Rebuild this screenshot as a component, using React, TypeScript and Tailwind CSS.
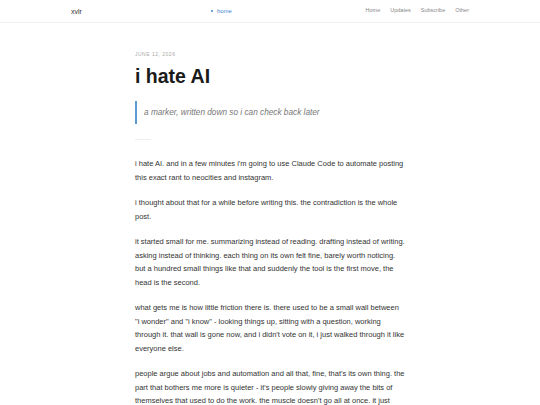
const paragraphs = [
  "i hate AI. and in a few minutes i'm going to use Claude Code to automate posting this exact rant to neocities and instagram.",
  "i thought about that for a while before writing this. the contradiction is the whole post.",
  "it started small for me. summarizing instead of reading. drafting instead of writing. asking instead of thinking. each thing on its own felt fine, barely worth noticing. but a hundred small things like that and suddenly the tool is the first move, the head is the second.",
  "what gets me is how little friction there is. there used to be a small wall between \"i wonder\" and \"i know\" - looking things up, sitting with a question, working through it. that wall is gone now, and i didn't vote on it, i just walked through it like everyone else.",
  "people argue about jobs and automation and all that, fine, that's its own thing. the part that bothers me more is quieter - it's people slowly giving away the bits of themselves that used to do the work. the muscle doesn't go all at once. it just gets a little softer every time you skip the rep.",
];

const navLinks = ["Home", "Updates", "Subscribe", "Other"];

export default function App() {
  return (
    <div className="min-h-screen bg-white font-['Liberation_Sans',Arial,sans-serif]">
      {/* Top bar */}
      <header className="h-[23px] border-b border-[#f0f0f0]">
        <div className="mx-auto flex h-full w-[400px] items-center">
          <span className="ml-[1px] text-[7px] leading-none text-[#333]">xvlr</span>
          <span className="ml-[129px] flex items-center gap-[4px] text-[6px] leading-none text-[#3f86d0]">
            <span className="h-[2px] w-[2px] rounded-full bg-[#3f86d0]" />
            home
          </span>
          <nav className="ml-auto flex items-center gap-[10px] pr-[1px]">
            {navLinks.map((link) => (
              <a key={link} className="text-[5.5px] leading-none text-[#888]">
                {link}
              </a>
            ))}
          </nav>
        </div>
      </header>

      {/* Post */}
      <main className="mx-auto w-[270px] pt-[28px] pb-10">
        <p className="text-[5px] leading-[7px] tracking-[0.1em] text-[#aaa] uppercase">June 12, 2026</p>
        <h1 className="mt-[7px] text-[19.5px] leading-[23px] font-bold text-[#1a1a1a]">i hate AI</h1>

        <blockquote className="mt-[13px] border-l-2 border-[#5b9bd5] py-[6px] pl-[7px]">
          <p className="text-[8.25px] leading-[11px] italic text-[#777]">a marker, written down so i can check back later</p>
        </blockquote>

        <div className="mt-[15px] h-px w-[16px] bg-[#eee]" />

        <article className="mt-[17px] flex flex-col gap-[12px]">
          {paragraphs.map((text, i) => (
            <p key={i} className="text-[7.5px] leading-[13.5px] text-[#333]">
              {text}
            </p>
          ))}
        </article>
      </main>
    </div>
  );
}
